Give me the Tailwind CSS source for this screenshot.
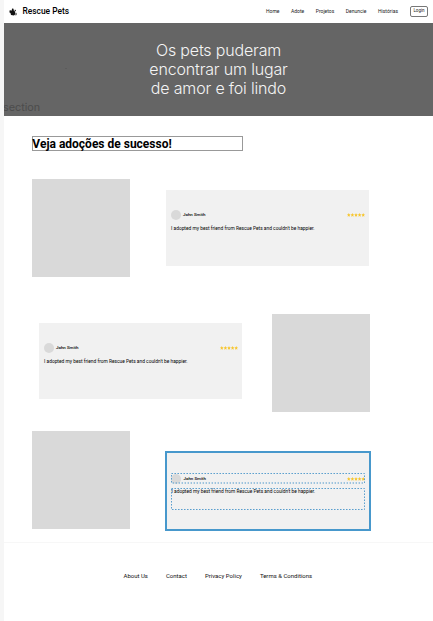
<!DOCTYPE html>
<html lang="pt-BR">
<head>
<meta charset="utf-8">
<title>Rescue Pets</title>
<script src="https://cdn.jsdelivr.net/npm/@tailwindcss/browser@4"></script>
</head>
<body class="w-[433px] h-[621px] overflow-hidden bg-[#f6f6f6] pl-1 font-['Roboto',sans-serif] text-black">
<svg class="hidden">
  <symbol id="stars" viewBox="0 0 90 20">
    <g fill="#f7c62f">
      <path id="star" d="M9 0l2.700 6.200 6.300.700-4.600 4.500 1.300 6.800L9 15l-5.700 3.200 1.300-6.800L0 6.900l6.300-.7z"/>
      <use href="#star" x="18"/><use href="#star" x="36"/><use href="#star" x="54"/><use href="#star" x="72"/>
    </g>
  </symbol>
</svg>
<div class="flex h-full flex-col bg-white">
  <header class="flex h-[23px] shrink-0 items-center pl-[5px] pr-[5px]">
    <svg class="h-[8px] w-[8px]" viewBox="0 0 16 16" fill="#111"><path d="M1 5l3-.5 1.500 1L6 1l3 .5.500 3.500 2.500 2v6l-2 2-6-1-1-4-2-1z"/><path d="M12 3l2 2-1 2-2-2zM13 9l2 1v4l-2 1z"/></svg>
    <span class="ml-[5.500px] whitespace-nowrap text-[8.400px] font-medium leading-none">Rescue Pets</span>
    <nav class="ml-auto flex items-center whitespace-nowrap text-[5px] leading-none text-[#222]">
      <span class="mr-[11.500px]">Home</span><span class="mr-[11.500px]">Adote</span><span class="mr-[11.500px]">Projetos</span><span class="mr-[11.500px]">Denuncie</span><span class="mr-[12px]">Histórias</span>
      <span class="flex h-[11px] w-[18px] items-center justify-center rounded-[2px] border border-[#777] text-[4.500px]">Login</span>
    </nav>
  </header>
  <section class="relative h-[92.500px] shrink-0 overflow-hidden bg-[#656565] pt-[18px]">
    <h1 class="text-center font-['Inter',sans-serif] text-[16px] font-light leading-[19px] tracking-[-0.170px] text-[#f4f4f4]">Os pets puderam<br>encontrar um lugar<br>de amor e foi lindo</h1>
    <span class="absolute -left-px top-[79px] font-['Inter',sans-serif] text-[10.800px] leading-[12px] text-[#4c4c4c]">section</span>
    <span class="absolute left-[61px] top-[45px] h-px w-[2px] bg-[#5c5c5c]"></span>
  </section>
  <main class="h-[426.500px] shrink-0 pl-[28px] pt-[20.500px]">
    <h2 class="flex h-[15px] w-[211px] items-center whitespace-nowrap border border-[#999] text-[12px] font-bold leading-none"><span class="-ml-[0.700px]">Veja adoções de sucesso!</span></h2>
    <div class="mt-[28.400px] flex h-[98px] items-center gap-[36.500px]">
      <div class="h-[98px] w-[97.500px] bg-[#d9d9d9]"></div>
      <article class="h-[76px] w-[203px] bg-[#f1f1f1] pl-[5px] pr-[4.500px] pt-[19.500px]">
        <div class="flex h-[10.500px] items-center">
          <i class="h-[10px] w-[10px] rounded-full bg-[#d9d9d9]"></i>
          <b class="ml-[2px] whitespace-nowrap pt-[0.600px] text-[4.400px] font-medium leading-none">John Smith</b>
          <svg class="ml-auto h-[4px] w-[18px]"><use href="#stars"/></svg>
        </div>
        <p class="mt-[6px] whitespace-nowrap text-[4.850px] leading-[6px]">I adopted my best friend from Rescue Pets and couldn't be happier.</p>
      </article>
    </div>
    <div class="mt-[36.700px] flex h-[98px] items-center gap-[30px] pl-[7px]">
      <article class="-mt-[4px] h-[76px] w-[203px] bg-[#f1f1f1] pl-[5px] pr-[4.500px] pt-[19.500px]">
        <div class="flex h-[10.500px] items-center">
          <i class="h-[10px] w-[10px] rounded-full bg-[#d9d9d9]"></i>
          <b class="ml-[2px] whitespace-nowrap pt-[0.600px] text-[4.400px] font-medium leading-none">John Smith</b>
          <svg class="ml-auto h-[4px] w-[18px]"><use href="#stars"/></svg>
        </div>
        <p class="mt-[6px] whitespace-nowrap text-[4.850px] leading-[6px]">I adopted my best friend from Rescue Pets and couldn't be happier.</p>
      </article>
      <div class="h-[98px] w-[97.500px] bg-[#d9d9d9]"></div>
    </div>
    <div class="mt-[19.300px] flex gap-[35.500px]">
      <div class="h-[98px] w-[97.500px] shrink-0 bg-[#d9d9d9]"></div>
      <article class="mt-[20px] h-[80px] w-[206px] border-2 border-[#4798cc] bg-[#f1f1f1] px-[4px] pt-[19.900px]">
        <div class="relative flex h-[10.500px] items-center">
          <i class="h-[10px] w-[10px] rounded-full bg-[#d9d9d9]"></i>
          <b class="ml-[2.500px] whitespace-nowrap pt-[0.600px] text-[4.400px] font-medium leading-none">John Smith</b>
          <svg class="ml-auto h-[4px] w-[18px]"><use href="#stars"/></svg>
          <svg class="absolute inset-0 h-full w-full"><rect x=".5" y=".5" width="193" height="9.500" fill="none" stroke="#4b96ca" stroke-dasharray="1.400 1.600"/></svg>
        </div>
        <div class="relative mt-[4px] h-[22px]">
          <p class="whitespace-nowrap pl-[0.500px] pt-px text-[4.850px] leading-[6px]">I adopted my best friend from Rescue Pets and couldn't be happier.</p>
          <svg class="absolute inset-0 h-full w-full"><rect x=".5" y=".5" width="193" height="21" fill="none" stroke="#4b96ca" stroke-dasharray="1.400 1.600"/></svg>
        </div>
      </article>
    </div>
  </main>
  <footer class="flex flex-1 items-start gap-[18px] whitespace-nowrap border-t border-[#f7f7f7] pl-[119.500px] pt-[29px] text-[6px] leading-[7px] text-[#111]">
    <span>About Us</span><span>Contact</span><span>Privacy Policy</span><span>Terms &amp; Conditions</span>
  </footer>
</div>
</body>
</html>
